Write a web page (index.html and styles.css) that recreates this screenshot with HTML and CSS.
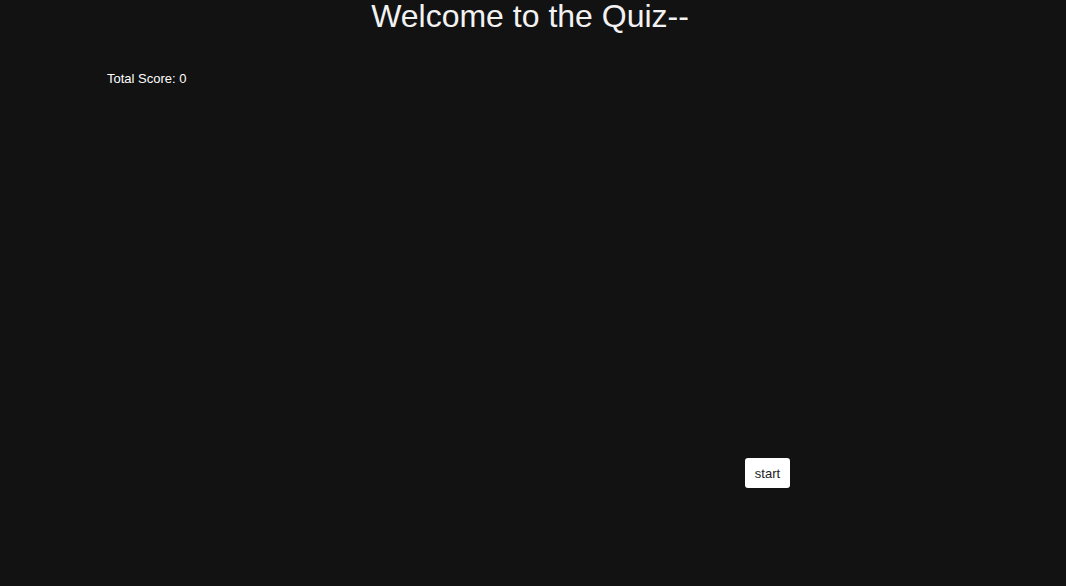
FILE: index.html
```html
<!DOCTYPE html>
<html>
<head>
<meta charset="utf-8">
<link rel="stylesheet" href="styles.css">
</head>
<body>
<h1 class="title">Welcome to the Quiz--</h1>
<div class="score">Total Score: 0</div>
<div class="stage">
  <button class="start">start</button>
</div>
</body>
</html>
```
FILE: styles.css
```css
html, body {
  margin: 0;
  padding: 0;
  background: #121212;
  height: 100%;
}
body {
  font-family: "Liberation Sans", Arial, sans-serif;
  color: #f2f2f2;
}
.title {
  margin: 0;
  margin-top: -2px;
  padding-right: 6px;
  text-align: center;
  font-weight: 400;
  font-size: 32px;
  line-height: 37px;
}
.score {
  margin: 36px 0 0 107px;
  font-size: 13px;
  line-height: 15px;
  color: #ffffff;
}
.stage {
  display: flex;
  justify-content: flex-start;
  padding: 372px 0 0 745px;
}
.start {
  width: 45px;
  height: 30px;
  padding: 0;
  border: none;
  border-radius: 3px;
  background: #ffffff;
  color: #222222;
  font-family: "Liberation Sans", Arial, sans-serif;
  font-size: 13px;
}
```
